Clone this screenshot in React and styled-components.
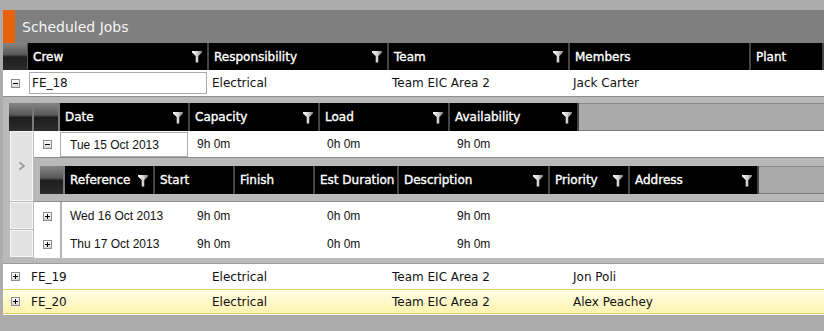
import React from 'react'
import styled, { createGlobalStyle } from 'styled-components'

const GlobalStyle = createGlobalStyle`
  html, body { margin: 0; padding: 0; background: #acacac; }
  body {
    font-family: "DejaVu Sans", Verdana, sans-serif;
    font-size: 12px;
    color: #111;
    overflow: hidden;
  }
`

const mainCols = '25px 181px 180px 181px 181px 1fr'
const dayHeadCols = '25px 26px 130px 130px 130px 129px 1fr'
const dayCols = '26px 130px 130px 130px 129px 1fr'
const jobCols = '25px 90px 80px 80px 84px 151px 80px 129px 1fr'

const Panel = styled.div`
  padding: 10px 0 0 3px;
`

const TitleBar = styled.div`
  height: 33px;
  box-sizing: border-box;
  background: #7f7f7f;
  border-left: 12px solid #e8620a;
  padding-left: 7px;
  display: flex;
  align-items: center;
  color: #f4f4f4;
  font-size: 14px;
`

const Grid = styled.div`
  background: #fff;
  padding-bottom: 1px;
`

const Row = styled.div`
  display: grid;
  grid-template-columns: ${p => p.$cols};
  height: ${p => p.$h}px;
  box-sizing: border-box;
  background: ${p => p.$bg || '#fff'};
  border-top: ${p => p.$top || 'none'};
  border-bottom: ${p => p.$bottom || 'none'};
`

const HeadRow = styled(Row)`
  background: #000;
  color: #fff;
`

const HCell = styled.div`
  display: flex;
  align-items: center;
  justify-content: space-between;
  padding: 0 5px 0 5px;
  border-right: 2px solid #444;
  white-space: nowrap;
  overflow: hidden;
  -webkit-text-stroke: 0.35px #fff;
`

const Corner = styled.div`
  background: linear-gradient(to bottom, #858585 0%, #5a5a5a 42%, #1e1e1e 52%, #2c2c2c 100%);
  border-right: ${p => p.$gap ? '2px solid #7a7a7a' : '1px solid #555'};
`

const Filler = styled.div`
  background: #ababab;
  border-top: 1px solid #8a8a8a;
  border-bottom: 1px solid #7c7c7c;
`

const Cell = styled.div`
  display: flex;
  align-items: center;
  padding-left: ${p => p.$pad ?? 3}px;
  white-space: nowrap;
  overflow: hidden;
  border-left: ${p => p.$line ? '2px solid #b4b4b4' : 'none'};
`

const ExpandCell = styled.div`
  display: flex;
  align-items: center;
  justify-content: center;
`

const Expander = styled.span`
  position: relative;
  width: 9px;
  height: 9px;
  box-sizing: border-box;
  border: 1px solid #8c8c8c;
  background: linear-gradient(#ffffff, #d6d6d6);
  &::before {
    content: '';
    position: absolute;
    left: 1px;
    right: 1px;
    top: 3px;
    height: 1px;
    background: #000;
  }
  &::after {
    content: '';
    display: ${p => (p.$open ? 'none' : 'block')};
    position: absolute;
    top: 1px;
    bottom: 1px;
    left: 3px;
    width: 1px;
    background: #000;
  }
`

const TextBox = styled.div`
  flex: 1;
  align-self: stretch;
  display: flex;
  align-items: center;
  margin: ${p => p.$m};
  padding-left: ${p => p.$pad}px;
  border: 1px solid #a9a9a9;
  background: #fff;
`

const Detail = styled.div`
  background: #b9b9b9;
  border-top: 1px solid #8e8e8e;
  padding: 6px 0 5px 6px;
`

const DayBody = styled.div`
  display: grid;
  grid-template-columns: 25px 1fr;
  font-family: "Liberation Sans", Arial, sans-serif;
  font-size: 12px;
`

const Indicator = styled.div`
  margin: 0 1px 1px 1px;
  background: #e2e2e2;
  border: 1px solid #f7f7f7;
  display: flex;
  align-items: center;
  justify-content: center;
`

const DayGroup = styled.div`
  display: flex;
  flex-direction: column;
`

const JobDetail = styled.div`
  background: #b9b9b9;
  border-top: 1px solid #8e8e8e;
  border-bottom: 1px solid #8e8e8e;
  padding: 8px 0 7px 6px;
  font-family: "DejaVu Sans", Verdana, sans-serif;
`

const Filter = () => (
  <svg width="10" height="13" viewBox="0 0 10 13" style={{ flexShrink: 0 }}>
    <defs>
      <linearGradient id="funnel" x1="0" x2="1" y1="0" y2="0">
        <stop offset="0" stopColor="#ffffff" />
        <stop offset="0.55" stopColor="#d0d0d0" />
        <stop offset="1" stopColor="#7c7c7c" />
      </linearGradient>
    </defs>
    <path d="M0 1H10V2.6L6.3 6V12.5H3.7V6L0 2.6Z" fill="url(#funnel)" />
  </svg>
)

const Chevron = () => (
  <svg width="8" height="10" viewBox="0 0 8 10">
    <polyline points="1.5,1.5 6,5 1.5,8.5" fill="none" stroke="#9a9a9a" strokeWidth="1.6" />
  </svg>
)

const H = ({ children, filter }) => (
  <HCell>
    <span>{children}</span>
    {filter && <Filter />}
  </HCell>
)

const crews = [
  { id: 'FE_19', resp: 'Electrical', team: 'Team EIC Area 2', member: 'Jon Poli' },
  { id: 'FE_20', resp: 'Electrical', team: 'Team EIC Area 2', member: 'Alex Peachey', selected: true },
]

const days = ['Wed 16 Oct 2013', 'Thu 17 Oct 2013']

function CrewRow({ crew }) {
  const sel = crew.selected
  return (
    <Row
      $cols={mainCols}
      $h={sel ? 25 : 26}
      $bg={sel ? 'linear-gradient(#fffde4, #fff4b0)' : '#fff'}
      $top={sel ? '1px solid #f1cd5e' : '1px solid #9c9c9c'}
      $bottom={sel ? '1px solid #f1cd5e' : 'none'}
    >
      <ExpandCell><Expander /></ExpandCell>
      <Cell>{crew.id}</Cell>
      <Cell>{crew.resp}</Cell>
      <Cell>{crew.team}</Cell>
      <Cell>{crew.member}</Cell>
      <Cell />
    </Row>
  )
}

export default function App() {
  return (
    <Panel>
      <GlobalStyle />
      <TitleBar>Scheduled Jobs</TitleBar>
      <Grid>
        <HeadRow $cols={mainCols} $h={27}>
          <Corner />
          <H filter>Crew</H>
          <H filter>Responsibility</H>
          <H filter>Team</H>
          <H>Members</H>
          <H>Plant</H>
        </HeadRow>

        <Row $cols={mainCols} $h={26}>
          <ExpandCell><Expander $open /></ExpandCell>
          <Cell $pad={0}>
            <TextBox $m="2px 2px 2px 1px" $pad={2}>FE_18</TextBox>
          </Cell>
          <Cell>Electrical</Cell>
          <Cell>Team EIC Area 2</Cell>
          <Cell>Jack Carter</Cell>
          <Cell />
        </Row>

        <Detail>
          <HeadRow $cols={dayHeadCols} $h={28}>
            <Corner $gap />
            <Corner $gap />
            <H filter>Date</H>
            <H filter>Capacity</H>
            <H filter>Load</H>
            <H filter>Availability</H>
            <Filler />
          </HeadRow>

          <DayBody>
            <Indicator><Chevron /></Indicator>
            <DayGroup>
              <Row $cols={dayCols} $h={26}>
                <ExpandCell><Expander $open /></ExpandCell>
                <Cell $pad={0}>
                  <TextBox $m="1px 2px 0 0" $pad={9}>Tue 15 Oct 2013</TextBox>
                </Cell>
                <Cell $pad={7}>9h 0m</Cell>
                <Cell $pad={7}>0h 0m</Cell>
                <Cell $pad={7}>9h 0m</Cell>
                <Cell />
              </Row>
              <JobDetail>
                <HeadRow $cols={jobCols} $h={28}>
                  <Corner $gap />
                  <H filter>Reference</H>
                  <H>Start</H>
                  <H>Finish</H>
                  <H>Est Duration</H>
                  <H filter>Description</H>
                  <H filter>Priority</H>
                  <H filter>Address</H>
                  <Filler />
                </HeadRow>
              </JobDetail>
            </DayGroup>

            {days.map(d => (
              <React.Fragment key={d}>
                <Indicator />
                <Row $cols={dayCols} $h={28}>
                  <ExpandCell><Expander /></ExpandCell>
                  <Cell $pad={8} $line>{d}</Cell>
                  <Cell $pad={7}>9h 0m</Cell>
                  <Cell $pad={7}>0h 0m</Cell>
                  <Cell $pad={7}>9h 0m</Cell>
                  <Cell />
                </Row>
              </React.Fragment>
            ))}
          </DayBody>
        </Detail>

        {crews.map(c => <CrewRow key={c.id} crew={c} />)}
      </Grid>
    </Panel>
  )
}
